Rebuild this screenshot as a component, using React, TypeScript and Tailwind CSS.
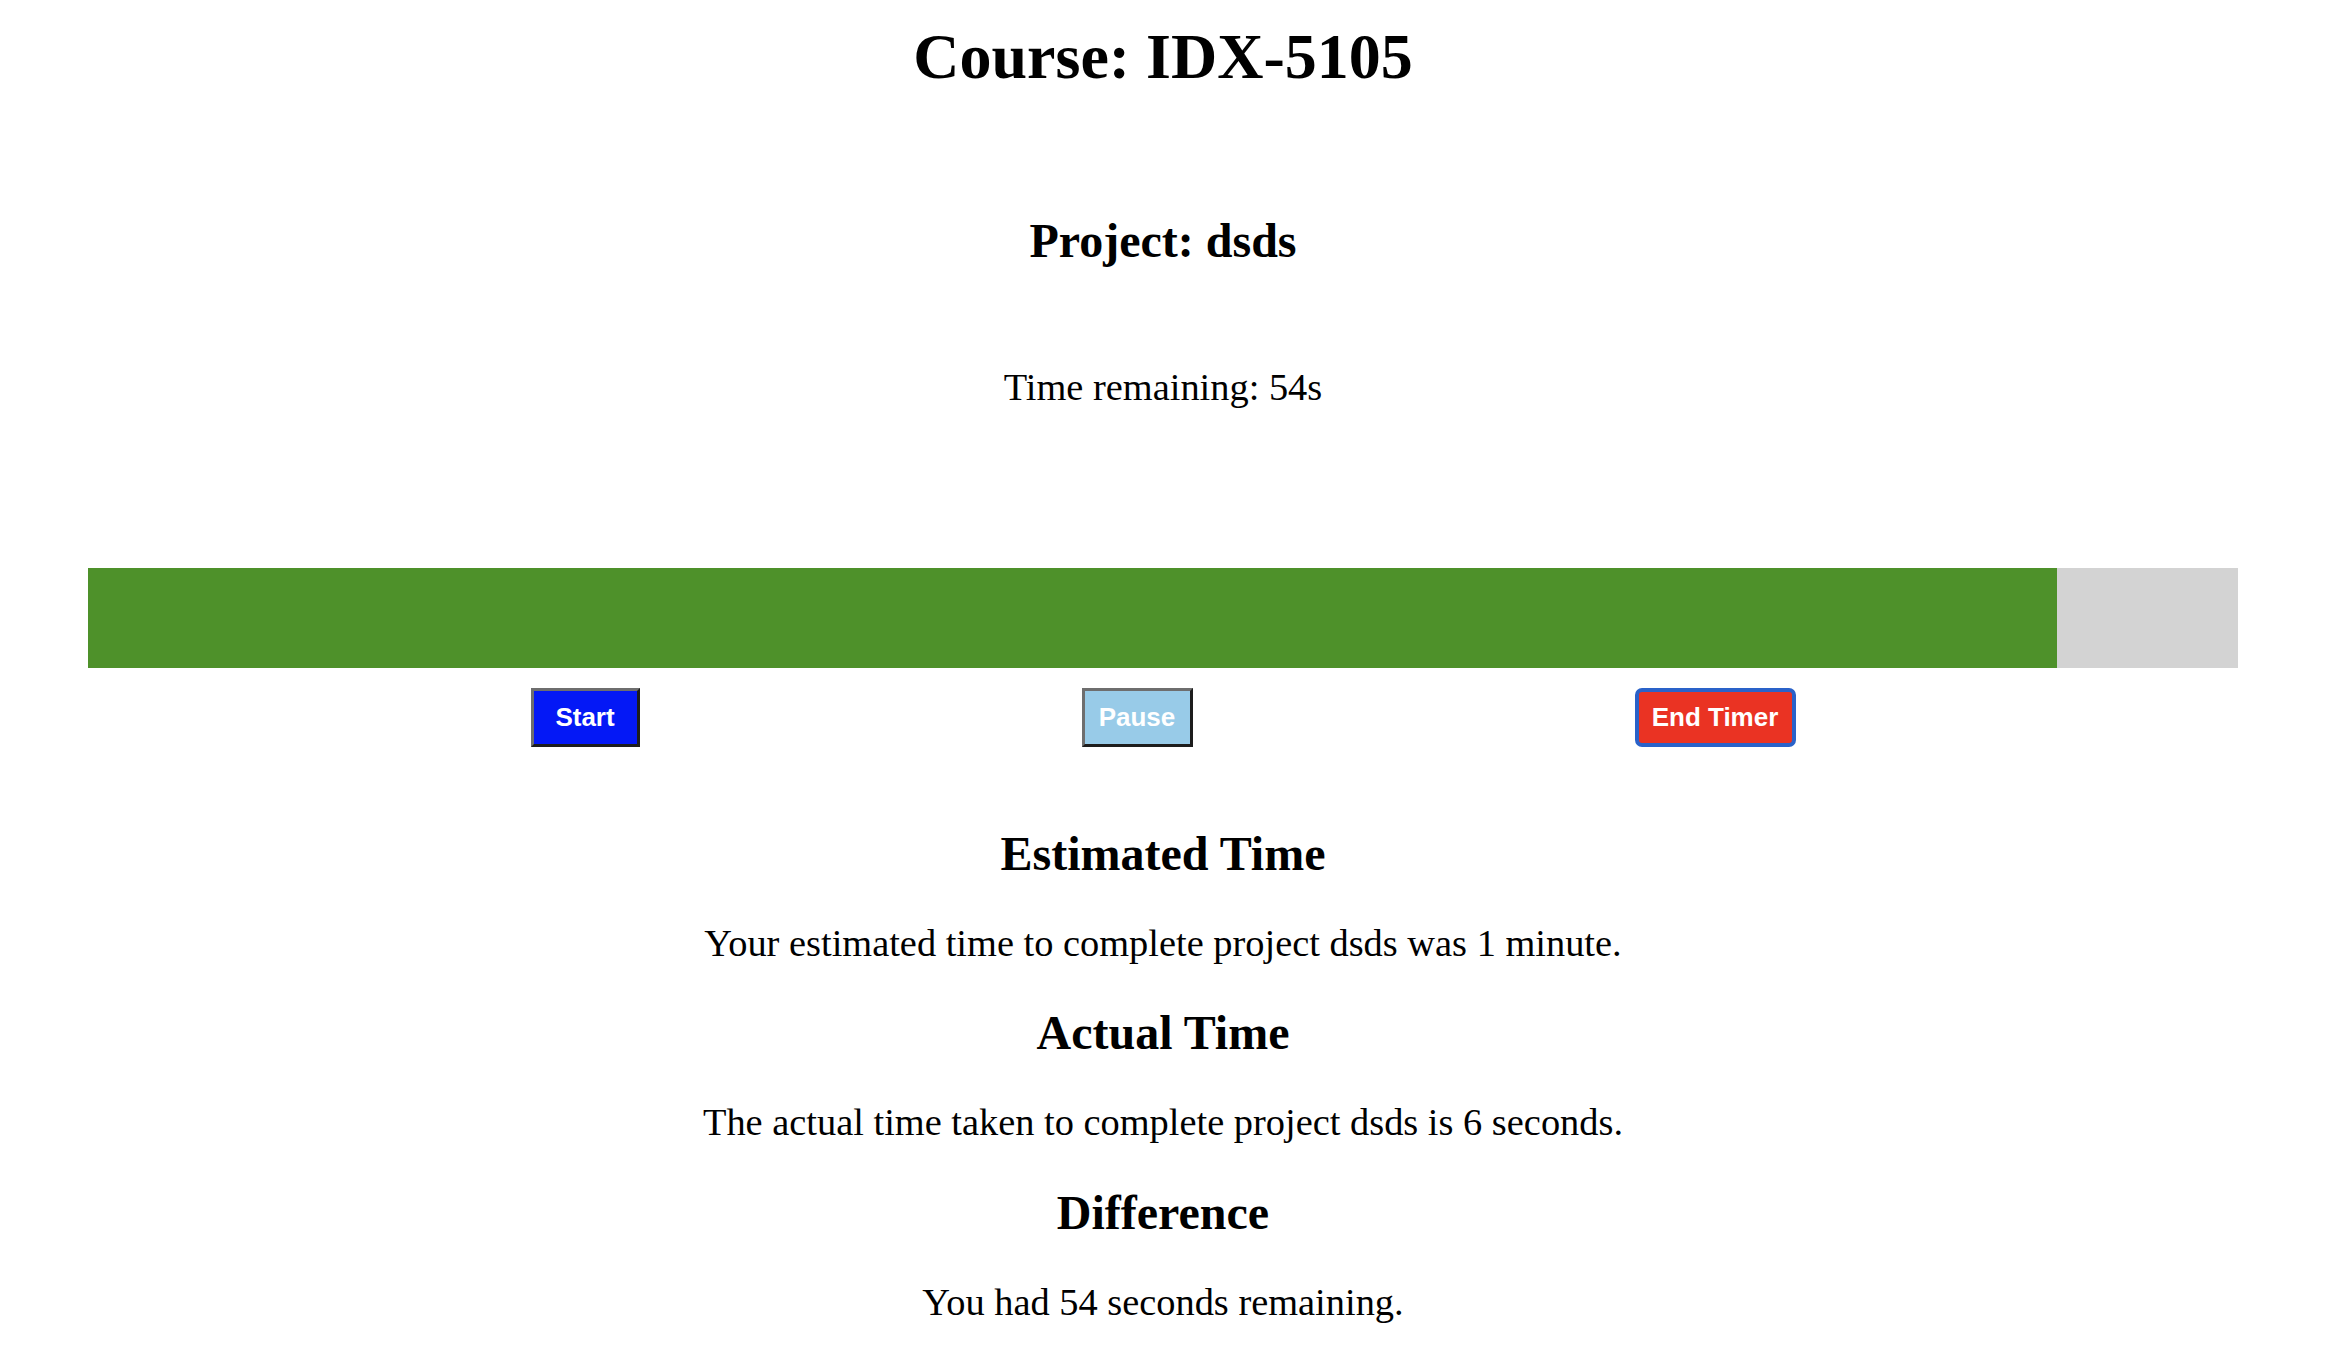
import React from "react";

export default function App() {
  const remaining = 54;
  const total = 60;
  const pct = (1969 / 2150) * 100;
  return (
    <div className="min-h-screen w-full bg-white text-black font-['Liberation_Serif',_'Times_New_Roman',_serif]">
      <h1 className="pt-[20px] text-center text-[64px] leading-[74px] font-bold">Course: IDX-5105</h1>
      <h2 className="mt-[119px] text-center text-[48px] leading-[56px] font-bold">Project: dsds</h2>
      <p className="mt-[96px] text-center text-[38.4px] leading-[44px]">Time remaining: {remaining}s</p>
      <div className="mx-auto mt-[159px] flex h-[100px] w-[2150px] bg-[#d3d3d3]">
        <div className="h-full bg-[#4e912a]" style={{ width: `${pct}%` }} data-total={total} />
      </div>
      <div className="mt-[20px] flex justify-center gap-[442px] font-['Liberation_Sans',_Arial,_sans-serif]">
        <button className="flex h-[59px] w-[109px] items-center justify-center border-[3px] border-t-[#6e6e6e] border-l-[#6e6e6e] border-b-[#1d1d1d] border-r-[#1d1d1d] bg-[#0418f6] text-[26px] font-bold text-white">
          Start
        </button>
        <button className="flex h-[59px] w-[111px] items-center justify-center border-[3px] border-t-[#6e6e6e] border-l-[#6e6e6e] border-b-[#1d1d1d] border-r-[#1d1d1d] bg-[#98cbe8] text-[26px] font-bold text-white">
          Pause
        </button>
        <button className="flex h-[59px] w-[161px] items-center justify-center rounded-[7px] border-4 border-[#2a62c9] bg-[#ea3323] text-[26px] font-bold text-white">
          End Timer
        </button>
      </div>
      <h2 className="mt-[79px] text-center text-[48px] leading-[56px] font-bold">Estimated Time</h2>
      <p className="mt-[39px] text-center text-[38.4px] leading-[44px]">
        Your estimated time to complete project dsds was 1 minute.
      </p>
      <h2 className="mt-[40px] text-center text-[48px] leading-[56px] font-bold">Actual Time</h2>
      <p className="mt-[39px] text-center text-[38.4px] leading-[44px]">
        The actual time taken to complete project dsds is 6 seconds.
      </p>
      <h2 className="mt-[41px] text-center text-[48px] leading-[56px] font-bold">Difference</h2>
      <p className="mt-[39px] text-center text-[38.4px] leading-[44px]">You had {remaining} seconds remaining.</p>
    </div>
  );
}
